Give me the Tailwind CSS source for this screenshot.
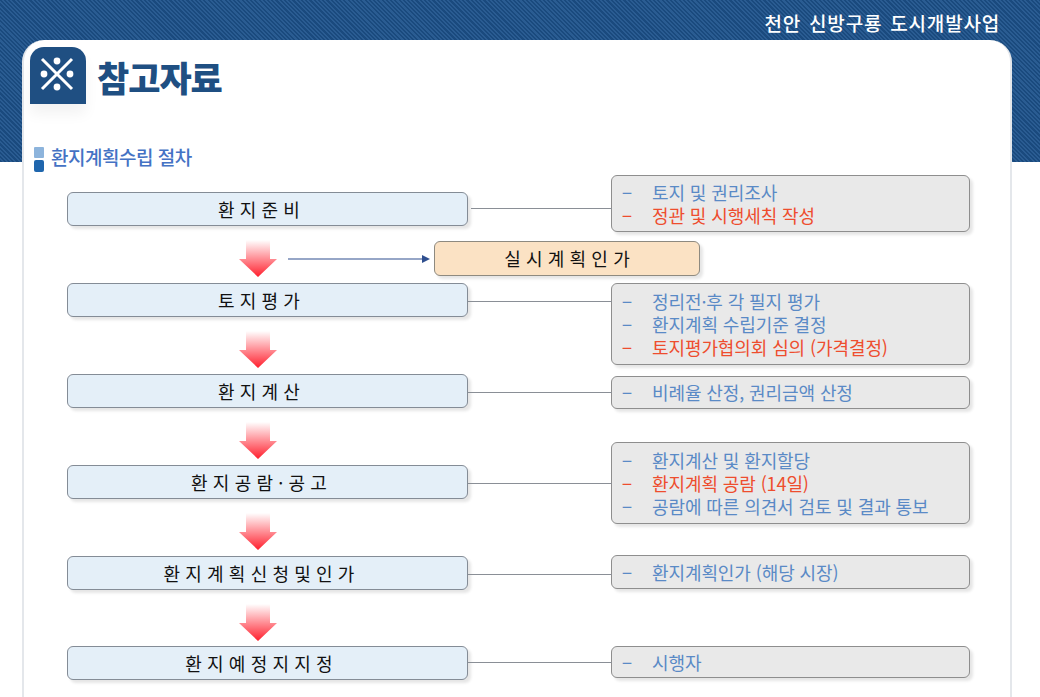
<!DOCTYPE html>
<html lang="ko">
  <head>
    <meta charset="UTF-8" />
    <title>참고자료</title>
    <script src="https://cdn.jsdelivr.net/npm/@tailwindcss/browser@4"></script>
  </head>
  <body class="bg-white font-['Noto_Sans_CJK_KR','Noto_Sans',sans-serif]">
    <div class="relative w-[1040px] h-[697px] overflow-hidden">
      <!-- striped band behind the card -->
      <div class="h-[162px] flex justify-end pr-[40px] pt-[9px] bg-[repeating-linear-gradient(45deg,#1a4a7e_0,#1a4a7e_1.5px,#2a5c92_1.5px,#2a5c92_3px)]">
        <p class="text-white text-[19px] font-medium leading-[28px] tracking-[0.8px] [word-spacing:2px]">천안 신방구룡 도시개발사업</p>
      </div>

      <!-- white card -->
      <div class="absolute left-[22px] top-[40px] w-[990px] h-[657px] bg-white rounded-t-[22px] border-x-2 border-[#e4e7eb]">
        <div class="flex items-start pl-[6px] pt-[7px]">
          <div class="w-[56px] h-[57px] rounded-t-[14px] bg-[#1f4f82] flex items-center justify-center pb-[3px] pr-[2px] shadow-[0_10px_14px_rgba(0,0,0,0.05)]">
            <svg width="36" height="36" viewBox="0 0 36 36">
              <path d="M3 3L33 33M33 3L3 33" stroke="#fff" stroke-width="3" />
              <circle cx="18" cy="5" r="3.4" fill="#fff" />
              <circle cx="18" cy="31" r="3.4" fill="#fff" />
              <circle cx="5" cy="18" r="3.4" fill="#fff" />
              <circle cx="31" cy="18" r="3.4" fill="#fff" />
            </svg>
          </div>
          <h1 class="ml-[11px] mt-[6px] text-[35px] leading-[48px] font-black text-[#1f4f82] tracking-[-1px]">참고자료</h1>
        </div>
        <div class="flex items-center mt-[40px] pl-[10px] h-[26px]">
          <div class="flex flex-col gap-[2px] w-[10px] mt-[5px]">
            <span class="h-[11px] bg-[#8db4dc] rounded-[1px]"></span>
            <span class="h-[12px] bg-[#1f66ad] rounded-[2px]"></span>
          </div>
          <h2 class="ml-[7px] text-[19px] leading-[26px] font-medium text-[#4472c4] tracking-[-0.5px]">환지계획수립 절차</h2>
        </div>
      </div>

      <!-- flow chart -->
      <div class="absolute left-[67px] top-[175px] w-[903px] h-[510px] flex justify-between">
        <div class="w-[401px] flex flex-col pt-[17px]">
          <div class="relative h-[34px] rounded-[6px] border border-[#848c96] bg-[#e4eff8] shadow-[3px_3px_3px_rgba(0,0,0,0.1)] flex items-center justify-center pr-[17px] text-[18px] text-[#111] tracking-[0.1px]">
            환 지 준 비
            <span class="absolute left-[403px] top-[15px] w-[141px] h-px bg-[#8a8f96]"></span>
          </div>
          <div class="relative h-[57px] flex items-center pl-[172px]">
            <svg width="38" height="38" viewBox="0 0 38 38" class="mt-[9px]">
              <defs>
                <linearGradient id="a1" x1="0" y1="0" x2="0" y2="1">
                  <stop offset="0" stop-color="#fff" />
                  <stop offset="1" stop-color="#ff1f2d" />
                </linearGradient>
              </defs>
              <path d="M7 0H31V19H38L19 37L0 19H7Z" fill="url(#a1)" />
            </svg>
            <svg width="142" height="8" viewBox="0 0 142 8" class="ml-[11px] mt-[9px]">
              <path d="M0 4H136" stroke="#2f4f8f" stroke-width="1.2" />
              <path d="M134 0L142 4L134 8Z" fill="#2f4f8f" />
            </svg>
            <div class="absolute left-[367px] top-[15px] w-[266px] h-[35px] rounded-[6px] border border-[#8e8a80] bg-[#fbe2c4] shadow-[3px_3px_3px_rgba(0,0,0,0.1)] flex items-center justify-center text-[18px] text-[#111] tracking-[0.1px]">실 시 계 획 인 가</div>
          </div>
          <div class="relative h-[34px] rounded-[6px] border border-[#848c96] bg-[#e4eff8] shadow-[3px_3px_3px_rgba(0,0,0,0.1)] flex items-center justify-center pr-[17px] text-[18px] text-[#111] tracking-[0.1px]">
            토 지 평 가
            <span class="absolute left-[400px] top-[17px] w-[144px] h-px bg-[#8a8f96]"></span>
          </div>
          <div class="h-[57px] flex items-center pl-[172px]">
            <svg width="38" height="38" viewBox="0 0 38 38" class="mt-[9px]"><path d="M7 0H31V19H38L19 37L0 19H7Z" fill="url(#a1)" /></svg>
          </div>
          <div class="relative h-[34px] rounded-[6px] border border-[#848c96] bg-[#e4eff8] shadow-[3px_3px_3px_rgba(0,0,0,0.1)] flex items-center justify-center pr-[17px] text-[18px] text-[#111] tracking-[0.1px]">
            환 지 계 산
            <span class="absolute left-[400px] top-[17px] w-[144px] h-px bg-[#8a8f96]"></span>
          </div>
          <div class="h-[57px] flex items-center pl-[172px]">
            <svg width="38" height="38" viewBox="0 0 38 38" class="mt-[9px]"><path d="M7 0H31V19H38L19 37L0 19H7Z" fill="url(#a1)" /></svg>
          </div>
          <div class="relative h-[34px] rounded-[6px] border border-[#848c96] bg-[#e4eff8] shadow-[3px_3px_3px_rgba(0,0,0,0.1)] flex items-center justify-center pr-[17px] text-[18px] text-[#111] tracking-[0.1px]">
            환 지 공 람 · 공 고
            <span class="absolute left-[400px] top-[17px] w-[144px] h-px bg-[#8a8f96]"></span>
          </div>
          <div class="h-[57px] flex items-center pl-[172px]">
            <svg width="38" height="38" viewBox="0 0 38 38" class="mt-[9px]"><path d="M7 0H31V19H38L19 37L0 19H7Z" fill="url(#a1)" /></svg>
          </div>
          <div class="relative h-[34px] rounded-[6px] border border-[#848c96] bg-[#e4eff8] shadow-[3px_3px_3px_rgba(0,0,0,0.1)] flex items-center justify-center pr-[17px] text-[18px] text-[#111] tracking-[0.1px]">
            환 지 계 획 신 청 및 인 가
            <span class="absolute left-[400px] top-[17px] w-[144px] h-px bg-[#8a8f96]"></span>
          </div>
          <div class="h-[56px] flex items-center pl-[172px]">
            <svg width="38" height="38" viewBox="0 0 38 38" class="mt-[9px]"><path d="M7 0H31V19H38L19 37L0 19H7Z" fill="url(#a1)" /></svg>
          </div>
          <div class="relative h-[34px] rounded-[6px] border border-[#848c96] bg-[#e4eff8] shadow-[3px_3px_3px_rgba(0,0,0,0.1)] flex items-center justify-center pr-[17px] text-[18px] text-[#111] tracking-[0.1px]">
            환 지 예 정 지 지 정
            <span class="absolute left-[400px] top-[15px] w-[144px] h-px bg-[#8a8f96]"></span>
          </div>
        </div>

        <div class="w-[359px] flex flex-col text-[18px] leading-[23px] tracking-[-0.1px] text-[#5a8ac6]">
          <div class="h-[57px] rounded-[6px] border border-[#8e8e8e] bg-[#e9e9e9] shadow-[3px_3px_3px_rgba(0,0,0,0.1)] flex flex-col justify-center pl-[10px]">
            <p class="flex"><span class="w-[30px]">−</span>토지 및 권리조사</p>
            <p class="flex text-[#ee4d2e]"><span class="w-[30px]">−</span>정관 및 시행세칙 작성</p>
          </div>
          <div class="mt-[51px] h-[82px] rounded-[6px] border border-[#8e8e8e] bg-[#e9e9e9] shadow-[3px_3px_3px_rgba(0,0,0,0.1)] flex flex-col justify-center pl-[10px]">
            <p class="flex"><span class="w-[30px]">−</span>정리전·후 각 필지 평가</p>
            <p class="flex"><span class="w-[30px]">−</span>환지계획 수립기준 결정</p>
            <p class="flex text-[#ee4d2e]"><span class="w-[30px]">−</span>토지평가협의회 심의 (가격결정)</p>
          </div>
          <div class="mt-[11px] h-[33px] rounded-[6px] border border-[#8e8e8e] bg-[#e9e9e9] shadow-[3px_3px_3px_rgba(0,0,0,0.1)] flex flex-col justify-center pl-[10px]">
            <p class="flex"><span class="w-[30px]">−</span>비례율 산정, 권리금액 산정</p>
          </div>
          <div class="mt-[33px] h-[82px] rounded-[6px] border border-[#8e8e8e] bg-[#e9e9e9] shadow-[3px_3px_3px_rgba(0,0,0,0.1)] flex flex-col justify-center pl-[10px]">
            <p class="flex"><span class="w-[30px]">−</span>환지계산 및 환지할당</p>
            <p class="flex text-[#ee4d2e]"><span class="w-[30px]">−</span>환지계획 공람 (14일)</p>
            <p class="flex"><span class="w-[30px]">−</span>공람에 따른 의견서 검토 및 결과 통보</p>
          </div>
          <div class="mt-[31px] h-[34px] rounded-[6px] border border-[#8e8e8e] bg-[#e9e9e9] shadow-[3px_3px_3px_rgba(0,0,0,0.1)] flex flex-col justify-center pl-[10px]">
            <p class="flex"><span class="w-[30px]">−</span>환지계획인가 (해당 시장)</p>
          </div>
          <div class="mt-[57px] h-[32px] rounded-[6px] border border-[#8e8e8e] bg-[#e9e9e9] shadow-[3px_3px_3px_rgba(0,0,0,0.1)] flex flex-col justify-center pl-[10px]">
            <p class="flex"><span class="w-[30px]">−</span>시행자</p>
          </div>
        </div>
      </div>
    </div>
  </body>
</html>
